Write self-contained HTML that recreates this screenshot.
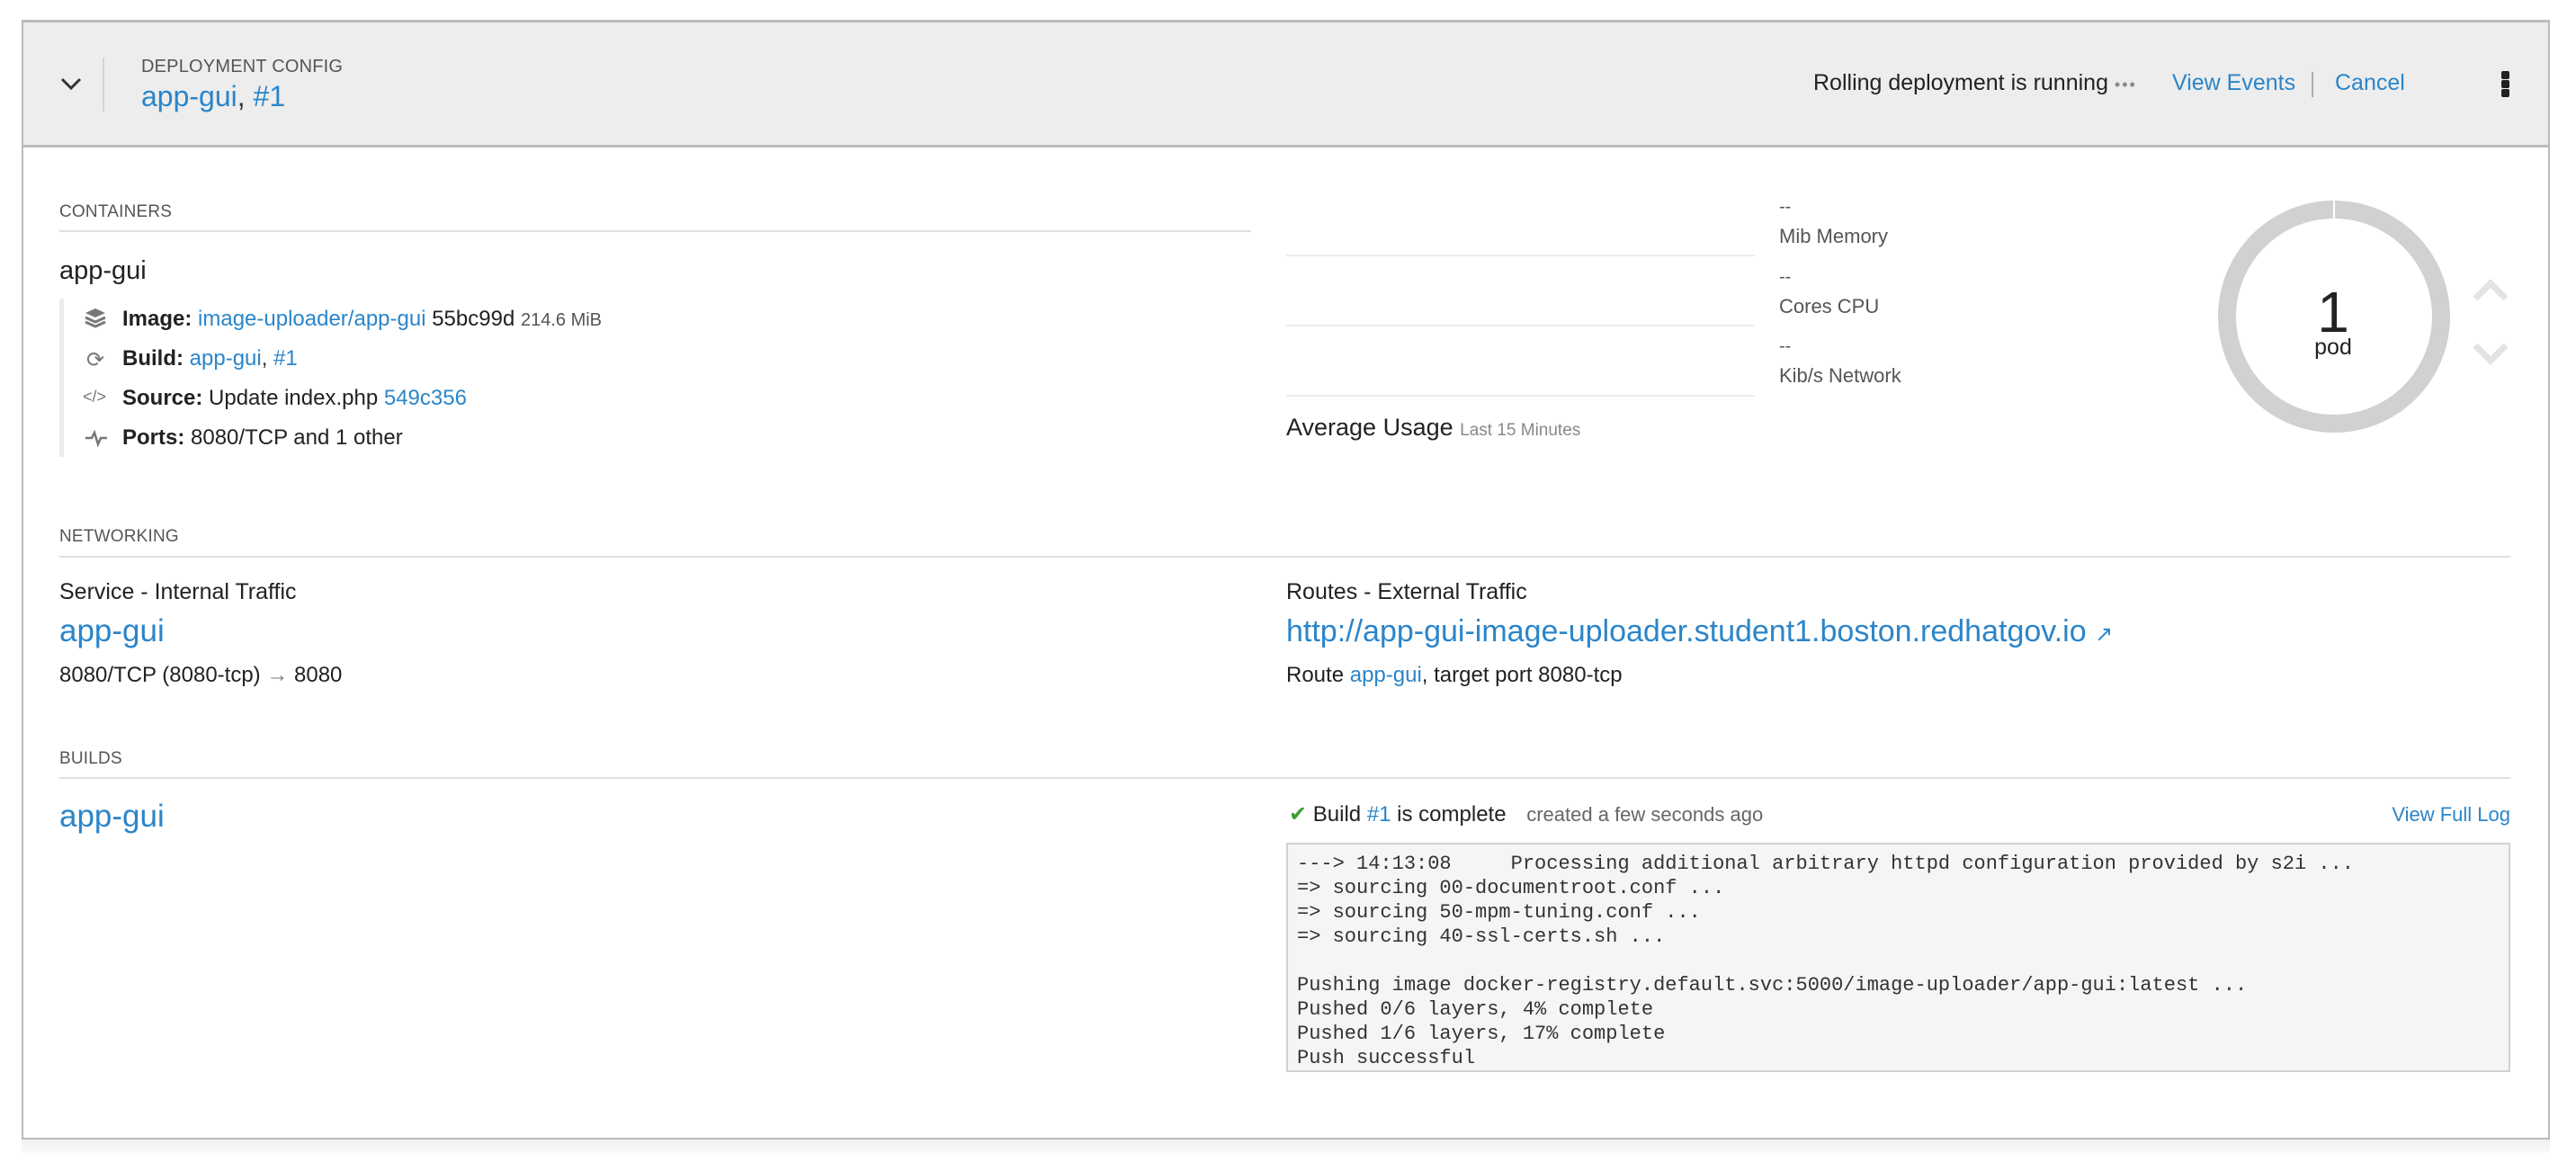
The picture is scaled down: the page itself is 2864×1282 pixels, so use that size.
<!DOCTYPE html>
<html><head><meta charset="utf-8"><style>
*{margin:0;padding:0;box-sizing:border-box}
body{width:2864px;height:1282px;background:#fff;font-family:"Liberation Sans",sans-serif;color:#363636;position:relative;overflow:hidden}
.a{position:absolute;white-space:nowrap}
a,.l{color:#2b85c9;text-decoration:none}
.h{font-size:19px;color:#555;letter-spacing:0.2px}
.line{position:absolute;height:2px;background:#e0e0e0}
.mono{font-family:"Liberation Mono",monospace;font-size:22px;line-height:27px;color:#333;white-space:pre}
</style></head><body>
<div class="a" style="left:24px;top:22px;width:2811px;height:1245px;border:2px solid #bbb;border-top-width:3px"></div>
<div class="a" style="left:24px;bottom:0;width:2811px;height:15px;background:linear-gradient(#f0f0f0,#fafafa)"></div>
<div class="a" style="left:26px;top:25px;width:2807px;height:139px;background:#ededed;border-bottom:3px solid #bbb"></div>
<svg class="a" style="left:67px;top:85px" width="24" height="16" viewBox="0 0 24 16"><path d="M2 3 L12 13 L22 3" fill="none" stroke="#333" stroke-width="3"/></svg>
<div class="a" style="left:114px;top:64px;width:2px;height:60px;background:#d4d4d4"></div>
<div class="a h" style="left:157px;top:63px;font-size:20px">DEPLOYMENT CONFIG</div>
<div class="a" style="left:157px;top:89px;font-size:32px"><span class="l">app-gui</span>, <span class="l">#1</span></div>
<div class="a" style="left:2016px;top:78px;font-size:25px;color:#222">Rolling deployment is running <span style="color:#888;font-size:18px;letter-spacing:2px">&#8226;&#8226;&#8226;</span></div>
<div class="a l" style="left:2415px;top:78px;font-size:25px">View Events</div>
<div class="a" style="left:2570px;top:80px;width:2px;height:28px;background:#aaa"></div>
<div class="a l" style="left:2596px;top:78px;font-size:25px">Cancel</div>
<div class="a" style="left:2781px;top:79px;width:9px;height:9px;background:#222;border-radius:2px"></div>
<div class="a" style="left:2781px;top:89px;width:9px;height:9px;background:#222;border-radius:2px"></div>
<div class="a" style="left:2781px;top:99px;width:9px;height:9px;background:#222;border-radius:2px"></div>

<div class="a h" style="left:66px;top:225px">CONTAINERS</div>
<div class="line" style="left:66px;top:256px;width:1325px"></div>
<div class="a" style="left:66px;top:285px;font-size:29px;color:#222">app-gui</div>
<div class="a" style="left:66px;top:332px;width:5px;height:176px;background:#ececec"></div>
<svg class="a" style="left:94px;top:342px" width="24" height="26" viewBox="0 0 24 26"><path d="M12 1 L23 6 L12 11 L1 6Z" fill="#777"/><path d="M1 11 L12 16 L23 11 M1 16 L12 21 L23 16" fill="none" stroke="#777" stroke-width="3"/></svg>
<div class="a" style="left:136px;top:341px;font-size:24px"><b style="color:#222">Image:</b> <span class="l">image-uploader/app-gui</span> <span style="color:#222">55bc99d</span> <span style="font-size:20px;color:#555">214.6 MiB</span></div>
<div class="a" style="left:96px;top:386px;font-size:24px;color:#777">&#10227;</div>
<div class="a" style="left:136px;top:385px;font-size:24px"><b style="color:#222">Build:</b> <span class="l">app-gui</span>, <span class="l">#1</span></div>
<div class="a" style="left:92px;top:431px;font-size:18px;color:#777">&lt;/&gt;</div>
<div class="a" style="left:136px;top:429px;font-size:24px;color:#222"><b>Source:</b> Update index.php <span class="l">549c356</span></div>
<svg class="a" style="left:94px;top:477px" width="26" height="20" viewBox="0 0 26 20"><path d="M1 10 H8 L11 4 L15 17 L18 10 H25" fill="none" stroke="#777" stroke-width="2.5"/></svg>
<div class="a" style="left:136px;top:473px;font-size:24px;color:#222"><b>Ports:</b> 8080/TCP and 1 other</div>

<div class="line" style="left:1430px;top:283px;width:521px;background:#ececec"></div>
<div class="line" style="left:1430px;top:361px;width:521px;background:#ececec"></div>
<div class="line" style="left:1430px;top:439px;width:521px;background:#ececec"></div>
<div class="a" style="left:1978px;top:219px;font-size:20px;color:#555">--</div>
<div class="a" style="left:1978px;top:250px;font-size:22px;color:#555">Mib Memory</div>
<div class="a" style="left:1978px;top:297px;font-size:20px;color:#555">--</div>
<div class="a" style="left:1978px;top:328px;font-size:22px;color:#555">Cores CPU</div>
<div class="a" style="left:1978px;top:374px;font-size:20px;color:#555">--</div>
<div class="a" style="left:1978px;top:405px;font-size:22px;color:#555">Kib/s Network</div>
<div class="a" style="left:1430px;top:460px;font-size:27px;color:#222">Average Usage <span style="font-size:19px;color:#888">Last 15 Minutes</span></div>
<svg class="a" style="left:2464px;top:221px" width="262" height="262" viewBox="0 0 262 262"><circle cx="131" cy="131" r="119" fill="none" stroke="#d1d1d1" stroke-width="20"/><line x1="131" y1="0" x2="131" y2="24" stroke="#fff" stroke-width="2"/></svg>
<div class="a" style="left:2554px;top:310px;width:80px;text-align:center;font-size:64px;color:#222;font-weight:300">1</div>
<div class="a" style="left:2554px;top:372px;width:80px;text-align:center;font-size:25px;color:#222">pod</div>
<svg class="a" style="left:2748px;top:306px" width="42" height="110" viewBox="0 0 42 110"><path d="M4 26 L21 9 L38 26 M4 78 L21 95 L38 78" fill="none" stroke="#e3e3e3" stroke-width="7"/></svg>

<div class="a h" style="left:66px;top:586px">NETWORKING</div>
<div class="line" style="left:66px;top:618px;width:2725px"></div>
<div class="a" style="left:66px;top:644px;font-size:25px;color:#222">Service - Internal Traffic</div>
<div class="a l" style="left:66px;top:682px;font-size:35px">app-gui</div>
<div class="a" style="left:66px;top:737px;font-size:24px;color:#222">8080/TCP (8080-tcp) <span style="color:#777">&#8594;</span> 8080</div>
<div class="a" style="left:1430px;top:644px;font-size:25px;color:#222">Routes - External Traffic</div>
<div class="a l" style="left:1430px;top:683px;font-size:34px">http://app-gui-image-uploader.student1.boston.redhatgov.io <span style="font-size:24px">&#8599;</span></div>
<div class="a" style="left:1430px;top:737px;font-size:24px;color:#222">Route <span class="l">app-gui</span>, target port 8080-tcp</div>

<div class="a h" style="left:66px;top:833px">BUILDS</div>
<div class="line" style="left:66px;top:864px;width:2725px"></div>
<div class="a l" style="left:66px;top:888px;font-size:35px">app-gui</div>
<div class="a" style="left:1433px;top:891px;font-size:24px;color:#222"><span style="color:#3f9c35">&#10004;</span> Build <span class="l">#1</span> is complete <span style="font-size:22px;color:#666;margin-left:16px">created a few seconds ago</span></div>
<div class="a l" style="right:73px;top:893px;font-size:22px">View Full Log</div>
<div class="a mono" style="left:1430px;top:937px;width:1361px;height:255px;background:#f5f5f5;border:2px solid #d1d1d1;padding:8px 10px">---&gt; 14:13:08     Processing additional arbitrary httpd configuration provided by s2i ...
=&gt; sourcing 00-documentroot.conf ...
=&gt; sourcing 50-mpm-tuning.conf ...
=&gt; sourcing 40-ssl-certs.sh ...

Pushing image docker-registry.default.svc:5000/image-uploader/app-gui:latest ...
Pushed 0/6 layers, 4% complete
Pushed 1/6 layers, 17% complete
Push successful</div>
</body></html>
